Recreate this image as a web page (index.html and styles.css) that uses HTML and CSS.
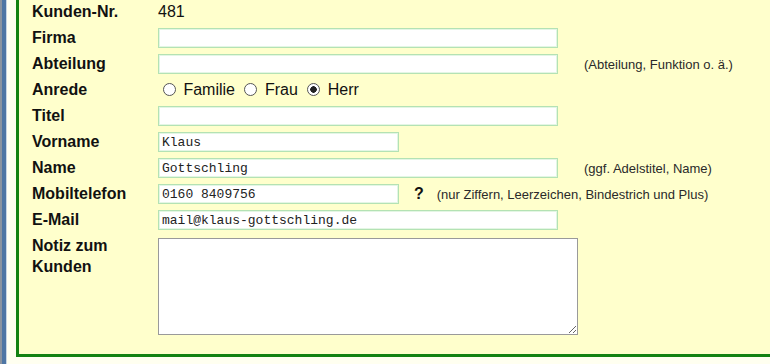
FILE: index.html
```html
<!DOCTYPE html>
<html lang="de">
<head>
    <meta charset="UTF-8">
    <meta name="viewport" content="width=device-width, initial-scale=1.0">
    <title>Kunde bearbeiten</title>
    <link rel="stylesheet" href="styles.css">
</head>
<body>
    <div class="page">
        <div class="sidebar"></div>
        <div class="content">
            <div class="box">
                <div class="form-grid">
                    <label class="label">Kunden-Nr.</label>
                    <div class="field">481</div>

                    <label class="label" for="firma">Firma</label>
                    <div class="field"><input type="text" id="firma" class="text-input"></div>

                    <label class="label" for="abteilung">Abteilung</label>
                    <div class="field">
                        <input type="text" id="abteilung" class="text-input">
                        <span class="hint">(Abteilung, Funktion o. ä.)</span>
                    </div>

                    <label class="label">Anrede</label>
                    <div class="field-inline">
                        <input type="radio" name="anrede" class="radio"> Familie
                        <input type="radio" name="anrede" class="radio"> Frau
                        <input type="radio" name="anrede" class="radio" checked> Herr
                    </div>

                    <label class="label" for="titel">Titel</label>
                    <div class="field"><input type="text" id="titel" class="text-input"></div>

                    <label class="label" for="vorname">Vorname</label>
                    <div class="field"><input type="text" id="vorname" class="text-input short" value="Klaus"></div>

                    <label class="label" for="name">Name</label>
                    <div class="field">
                        <input type="text" id="name" class="text-input" value="Gottschling">
                        <span class="hint">(ggf. Adelstitel, Name)</span>
                    </div>

                    <label class="label" for="mobil">Mobiltelefon</label>
                    <div class="field">
                        <input type="text" id="mobil" class="text-input short" value="0160 8409756">
                        <span class="help">?</span>
                        <span class="hint hint-near">(nur Ziffern, Leerzeichen, Bindestrich und Plus)</span>
                    </div>

                    <label class="label" for="email">E-Mail</label>
                    <div class="field"><input type="text" id="email" class="text-input" value="mail@klaus-gottschling.de"></div>

                    <label class="label label-multi" for="notiz">Notiz zum<br>Kunden</label>
                    <div class="field field-multi"><textarea id="notiz" class="notes"></textarea></div>
                </div>
            </div>
        </div>
    </div>
</body>
</html>
```

FILE: styles.css
```css
body {
    margin: 0;
    overflow: hidden;
    font-family: "Liberation Sans", Arial, sans-serif;
    color: #111;
    background-color: #fffff0;
}

.page {
    display: flex;
    min-height: 364px;
}

.sidebar {
    width: 4px;
    border-left: 2px solid #8a94a0;
    border-right: 1px solid #c8d6e4;
    background-color: #4e76a4;
    flex-shrink: 0;
}

.content {
    padding-left: 9px;
    background-color: #fffff0;
}

.box {
    width: 880px;
    margin-top: -1px;
    padding: 0 0 17px 13px;
    background-color: #ffffcc;
    border: 3px solid #138213;
    border-top: none;
}

.form-grid {
    display: grid;
    grid-template-columns: 126px 1fr;
    grid-auto-rows: 26px;
}

.label {
    display: flex;
    align-items: center;
    font-size: 16px;
    font-weight: bold;
}

.field {
    display: flex;
    align-items: center;
    font-size: 16px;
}

.field-inline {
    font-size: 16px;
    line-height: 26px;
}

.text-input {
    box-sizing: border-box;
    width: 400px;
    height: 20px;
    margin: 0;
    padding: 0 3px;
    border: 1px solid #b4e2b4;
    box-shadow: inset 0 0 0 1px #e4f6e4;
    background-color: white;
    font-family: "Liberation Mono", "Courier New", monospace;
    font-size: 13px;
    color: #222;
    outline: none;
}

.text-input.short {
    width: 241px;
}

.hint {
    margin-left: 26px;
    font-size: 13px;
    color: #2a2a2a;
}

.hint-near {
    margin-left: 13px;
}

.help {
    margin-left: 15px;
    font-weight: bold;
    font-size: 16px;
}

.radio {
    appearance: none;
    box-sizing: border-box;
    width: 13px;
    height: 13px;
    margin: 0 3px 0 5px;
    border: 1px solid #555;
    border-radius: 50%;
    background-color: white;
    vertical-align: -1px;
}

.radio:checked {
    background: radial-gradient(circle, #222 0 3px, white 3.5px);
}

.label-multi,
.field-multi {
    grid-row: span 4;
    align-items: flex-start;
}

.label-multi {
    padding-top: 2px;
    line-height: 21px;
}

.field-multi {
    padding-top: 5px;
}

.notes {
    box-sizing: border-box;
    width: 420px;
    height: 97px;
    margin: 0;
    border: 1px solid #9a9a9a;
    background-color: white;
    resize: both;
}
```
